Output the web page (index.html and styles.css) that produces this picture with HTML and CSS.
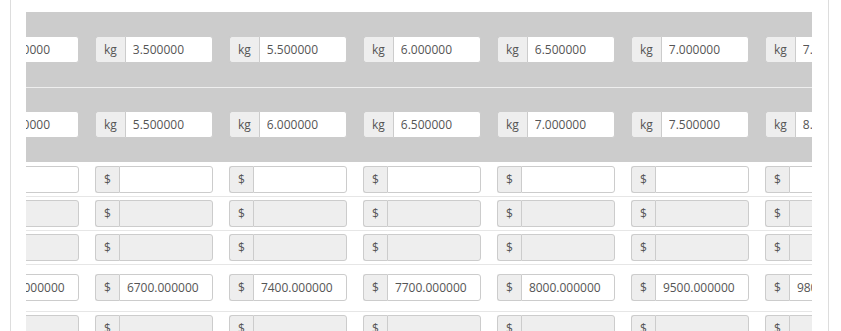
FILE: index.html
```html
<!DOCTYPE html>
<html lang="en">
<head>
    <meta charset="UTF-8">
    <meta name="viewport" content="width=device-width, initial-scale=1.0">
    <title>Price breaks</title>
    <link rel="stylesheet" href="styles.css">
</head>
<body>
    <div class="panel">
        <div class="scroller">
            <table class="grid">
                <tbody>
                    <tr class="weight weight-first">
                        <td><div class="group"><span class="addon">kg</span><input class="field" value="2.500000"></div></td>
                        <td><div class="group"><span class="addon">kg</span><input class="field" value="3.500000"></div></td>
                        <td><div class="group"><span class="addon">kg</span><input class="field" value="5.500000"></div></td>
                        <td><div class="group"><span class="addon">kg</span><input class="field" value="6.000000"></div></td>
                        <td><div class="group"><span class="addon">kg</span><input class="field" value="6.500000"></div></td>
                        <td><div class="group"><span class="addon">kg</span><input class="field" value="7.000000"></div></td>
                        <td><div class="group"><span class="addon">kg</span><input class="field" value="7.500000"></div></td>
                    </tr>
                    <tr class="weight weight-second">
                        <td><div class="group"><span class="addon">kg</span><input class="field" value="3.500000"></div></td>
                        <td><div class="group"><span class="addon">kg</span><input class="field" value="5.500000"></div></td>
                        <td><div class="group"><span class="addon">kg</span><input class="field" value="6.000000"></div></td>
                        <td><div class="group"><span class="addon">kg</span><input class="field" value="6.500000"></div></td>
                        <td><div class="group"><span class="addon">kg</span><input class="field" value="7.000000"></div></td>
                        <td><div class="group"><span class="addon">kg</span><input class="field" value="7.500000"></div></td>
                        <td><div class="group"><span class="addon">kg</span><input class="field" value="8.000000"></div></td>
                    </tr>
                    <tr class="price price-first">
                        <td><div class="group"><span class="addon">$</span><input class="field"></div></td>
                        <td><div class="group"><span class="addon">$</span><input class="field"></div></td>
                        <td><div class="group"><span class="addon">$</span><input class="field"></div></td>
                        <td><div class="group"><span class="addon">$</span><input class="field"></div></td>
                        <td><div class="group"><span class="addon">$</span><input class="field"></div></td>
                        <td><div class="group"><span class="addon">$</span><input class="field"></div></td>
                        <td><div class="group"><span class="addon">$</span><input class="field"></div></td>
                    </tr>
                    <tr class="price">
                        <td><div class="group"><span class="addon">$</span><input class="field" disabled></div></td>
                        <td><div class="group"><span class="addon">$</span><input class="field" disabled></div></td>
                        <td><div class="group"><span class="addon">$</span><input class="field" disabled></div></td>
                        <td><div class="group"><span class="addon">$</span><input class="field" disabled></div></td>
                        <td><div class="group"><span class="addon">$</span><input class="field" disabled></div></td>
                        <td><div class="group"><span class="addon">$</span><input class="field" disabled></div></td>
                        <td><div class="group"><span class="addon">$</span><input class="field" disabled></div></td>
                    </tr>
                    <tr class="price">
                        <td><div class="group"><span class="addon">$</span><input class="field" disabled></div></td>
                        <td><div class="group"><span class="addon">$</span><input class="field" disabled></div></td>
                        <td><div class="group"><span class="addon">$</span><input class="field" disabled></div></td>
                        <td><div class="group"><span class="addon">$</span><input class="field" disabled></div></td>
                        <td><div class="group"><span class="addon">$</span><input class="field" disabled></div></td>
                        <td><div class="group"><span class="addon">$</span><input class="field" disabled></div></td>
                        <td><div class="group"><span class="addon">$</span><input class="field" disabled></div></td>
                    </tr>
                    <tr class="price price-tall">
                        <td><div class="group"><span class="addon">$</span><input class="field" value="6000.000000"></div></td>
                        <td><div class="group"><span class="addon">$</span><input class="field" value="6700.000000"></div></td>
                        <td><div class="group"><span class="addon">$</span><input class="field" value="7400.000000"></div></td>
                        <td><div class="group"><span class="addon">$</span><input class="field" value="7700.000000"></div></td>
                        <td><div class="group"><span class="addon">$</span><input class="field" value="8000.000000"></div></td>
                        <td><div class="group"><span class="addon">$</span><input class="field" value="9500.000000"></div></td>
                        <td><div class="group"><span class="addon">$</span><input class="field" value="9800.000000"></div></td>
                    </tr>
                    <tr class="price">
                        <td><div class="group"><span class="addon">$</span><input class="field" disabled></div></td>
                        <td><div class="group"><span class="addon">$</span><input class="field" disabled></div></td>
                        <td><div class="group"><span class="addon">$</span><input class="field" disabled></div></td>
                        <td><div class="group"><span class="addon">$</span><input class="field" disabled></div></td>
                        <td><div class="group"><span class="addon">$</span><input class="field" disabled></div></td>
                        <td><div class="group"><span class="addon">$</span><input class="field" disabled></div></td>
                        <td><div class="group"><span class="addon">$</span><input class="field" disabled></div></td>
                    </tr>
                </tbody>
            </table>
        </div>
    </div>
</body>
</html>
```

FILE: styles.css
```css
body {
    margin: 0;
    font-family: "Open Sans", "Liberation Sans", sans-serif;
    font-size: 12px;
    color: #555;
    background-color: #fff;
    overflow: hidden;
}
.panel {
    margin-left: 10px;
    width: 786px;
    padding: 12px 16px 40px 15px;
    border-left: 1px solid #ddd;
    border-right: 1px solid #ddd;
}
.scroller {
    width: 786px;
    overflow: hidden;
}
.grid {
    margin-left: -73px;
    border-collapse: collapse;
    border-spacing: 0;
}
.grid td {
    padding: 0 8px;
    white-space: nowrap;
}
.weight {
    background-color: #ccc;
}
.weight-first td {
    padding-top: 24px;
    padding-bottom: 24px;
    border-bottom: 1px solid #eee;
}
.weight-second td {
    padding-top: 23px;
    padding-bottom: 24px;
}
.price td {
    padding-top: 3px;
    padding-bottom: 3px;
    border-top: 1px solid #e6e6e6;
}
.price-first td {
    padding-top: 4px;
    border-top: none;
}
.price-tall td {
    padding-top: 9px;
    padding-bottom: 10px;
}
.group {
    display: flex;
    width: 118px;
    height: 27px;
}
.addon {
    flex: none;
    display: flex;
    align-items: center;
    padding: 0 8px;
    background-color: #eee;
    border: 1px solid #ccc;
    border-right: none;
    border-radius: 3px 0 0 3px;
}
.field {
    flex: 1;
    min-width: 0;
    box-sizing: border-box;
    height: 27px;
    margin: 0;
    padding: 0 7px;
    font-family: inherit;
    font-size: 12px;
    color: #555;
    background-color: #fff;
    border: 1px solid #ccc;
    border-radius: 0 3px 3px 0;
    outline: none;
}
.field:disabled {
    background-color: #eee;
}
```
